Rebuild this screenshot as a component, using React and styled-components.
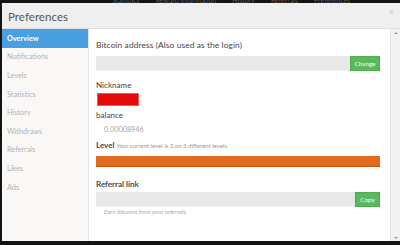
import React from 'react';
import styled, { createGlobalStyle } from 'styled-components';

const GlobalStyle = createGlobalStyle`
  body {
    margin: 0;
    background: #141414;
    font-family: Lato, "Open Sans", sans-serif;
  }
`;

const Page = styled.div`
  width: 400px;
  height: 245px;
  overflow: hidden;
  background: #141414;
`;

const TopStrip = styled.div`
  height: 3px;
  display: flex;
  align-items: flex-end;
  gap: 16px;
  padding-left: 112px;
  overflow: hidden;
`;

const StripText = styled.span`
  font-size: 7px;
  line-height: 6px;
  color: #5a5a5a;
  white-space: nowrap;
  flex-shrink: 0;
`;

const Modal = styled.div`
  margin-left: 2px;
  height: 238px;
  background: #fff;
  display: flex;
  flex-direction: column;
`;

const Header = styled.div`
  height: 25px;
  background: #efefef;
  border-bottom: 1px solid #dedede;
  display: flex;
  align-items: center;
  justify-content: space-between;
  padding: 0 6px;
  flex-shrink: 0;
`;

const Title = styled.h1`
  margin: 0;
  font-size: 11.6px;
  font-weight: 400;
  color: #555;
  padding-top: 1px;
`;

const Close = styled.span`
  font-size: 9px;
  color: #c4c4c4;
  align-self: flex-start;
  margin-top: 3px;
`;

const Body = styled.div`
  flex: 1;
  display: flex;
  min-height: 0;
`;

const Sidebar = styled.nav`
  width: 86px;
  background: #f9f8f6;
  border-right: 1px solid #e2e2e2;
  flex-shrink: 0;
`;

const NavItem = styled.div`
  height: 18.6px;
  display: flex;
  align-items: center;
  padding-left: 5px;
  font-size: 7.3px;
  font-weight: ${(p) => (p.$active ? 700 : 400)};
  color: ${(p) => (p.$active ? '#fff' : '#b3b3b3')};
  background: ${(p) => (p.$active ? '#4a9fe0' : 'transparent')};
`;

const Content = styled.main`
  flex: 1;
  padding: 9px 10px 0 7px;
  display: flex;
  flex-direction: column;
`;

const Label = styled.div`
  font-size: 8.1px;
  line-height: 14px;
  color: #444;
  margin-top: ${(p) => p.$mt || 0}px;
  white-space: nowrap;
`;

const WideLabel = styled(Label)`
  font-size: 8.4px;
  letter-spacing: 0.1px;
`;

const Heading = styled(Label)`
  font-size: 8px;
  font-weight: 700;
  color: #4a4a4a;
`;

const Small = styled.span`
  font-size: 6px;
  font-weight: 400;
  color: #999;
  margin-left: 2px;
`;

const InputRow = styled.div`
  display: flex;
  height: 15px;
  margin-top: ${(p) => p.$mt || 0}px;
`;

const Field = styled.div`
  flex: 1;
  background: #e8e8e8;
  border-bottom: 1px solid #f2f2f2;
`;

const GreenButton = styled.button`
  width: ${(p) => p.$w}px;
  border: 1px solid #4cae4c;
  background: #5cb85c;
  color: #f2fff2;
  font-family: inherit;
  font-size: 6.3px;
  padding: 0;
`;

const RedBox = styled.div`
  width: 42px;
  height: 13px;
  margin: 1px 0 0 1px;
  background: #e40b0b;
  border: 1px solid #f05a5a;
  box-sizing: border-box;
`;

const Value = styled.div`
  font-size: 7.3px;
  line-height: 12px;
  color: #a4a4a4;
  padding-left: 8px;
  margin-top: 1.5px;
`;

const LevelBar = styled.div`
  height: 11px;
  margin-top: 3.5px;
  background: #e06a1d;
  border-bottom: 1px solid #c2540d;
  box-sizing: border-box;
`;

const Hint = styled.div`
  font-size: 6.2px;
  line-height: 10px;
  font-style: italic;
  color: #aaa;
  padding-left: 8px;
`;

const Scrollbar = styled.div`
  width: 9px;
  background: #f1f1f1;
  border-left: 1px solid #e4e4e4;
  display: flex;
  flex-direction: column;
  justify-content: space-between;
  align-items: center;
  padding: 3px 0 2px;
  flex-shrink: 0;
`;

const Arrow = styled.span`
  width: 0;
  height: 0;
  border-left: 2px solid transparent;
  border-right: 2px solid transparent;
  ${(p) => (p.$down ? 'border-top: 2px solid #999;' : 'border-bottom: 2px solid #999;')}
`;

const navItems = ['Overview', 'Notifications', 'Levels', 'Statistics', 'History', 'Withdraws', 'Referrals', 'Likes', 'Ads'];

export default function App() {
  return (
    <Page>
      <GlobalStyle />
      <TopStrip aria-hidden="true">
        <StripText>Statistics</StripText>
        <StripText>Reward information</StripText>
        <StripText>History</StripText>
        <StripText>Referrals</StripText>
        <StripText>Preferences</StripText>
      </TopStrip>
      <Modal>
        <Header>
          <Title>Preferences</Title>
          <Close>×</Close>
        </Header>
        <Body>
          <Sidebar>
            {navItems.map((item, i) => (
              <NavItem key={item} $active={i === 0}>{item}</NavItem>
            ))}
          </Sidebar>
          <Content>
            <WideLabel>Bitcoin address (Also used as the login)</WideLabel>
            <InputRow $mt={4}>
              <Field />
              <GreenButton $w={30}>Change</GreenButton>
            </InputRow>
            <Label $mt={7}>Nickname</Label>
            <RedBox />
            <Label $mt={2}>balance</Label>
            <Value>0.00008946</Value>
            <Heading $mt={2}>
              Level<Small>Your current level is 3 on 3 different levels.</Small>
            </Heading>
            <LevelBar />
            <Heading $mt={9.7}>Referral link</Heading>
            <InputRow $mt={1.3}>
              <Field />
              <GreenButton $w={25}>Copy</GreenButton>
            </InputRow>
            <Hint>Earn bitcoins from your referrals.</Hint>
          </Content>
          <Scrollbar>
            <Arrow />
            <Arrow $down />
          </Scrollbar>
        </Body>
      </Modal>
    </Page>
  );
}
